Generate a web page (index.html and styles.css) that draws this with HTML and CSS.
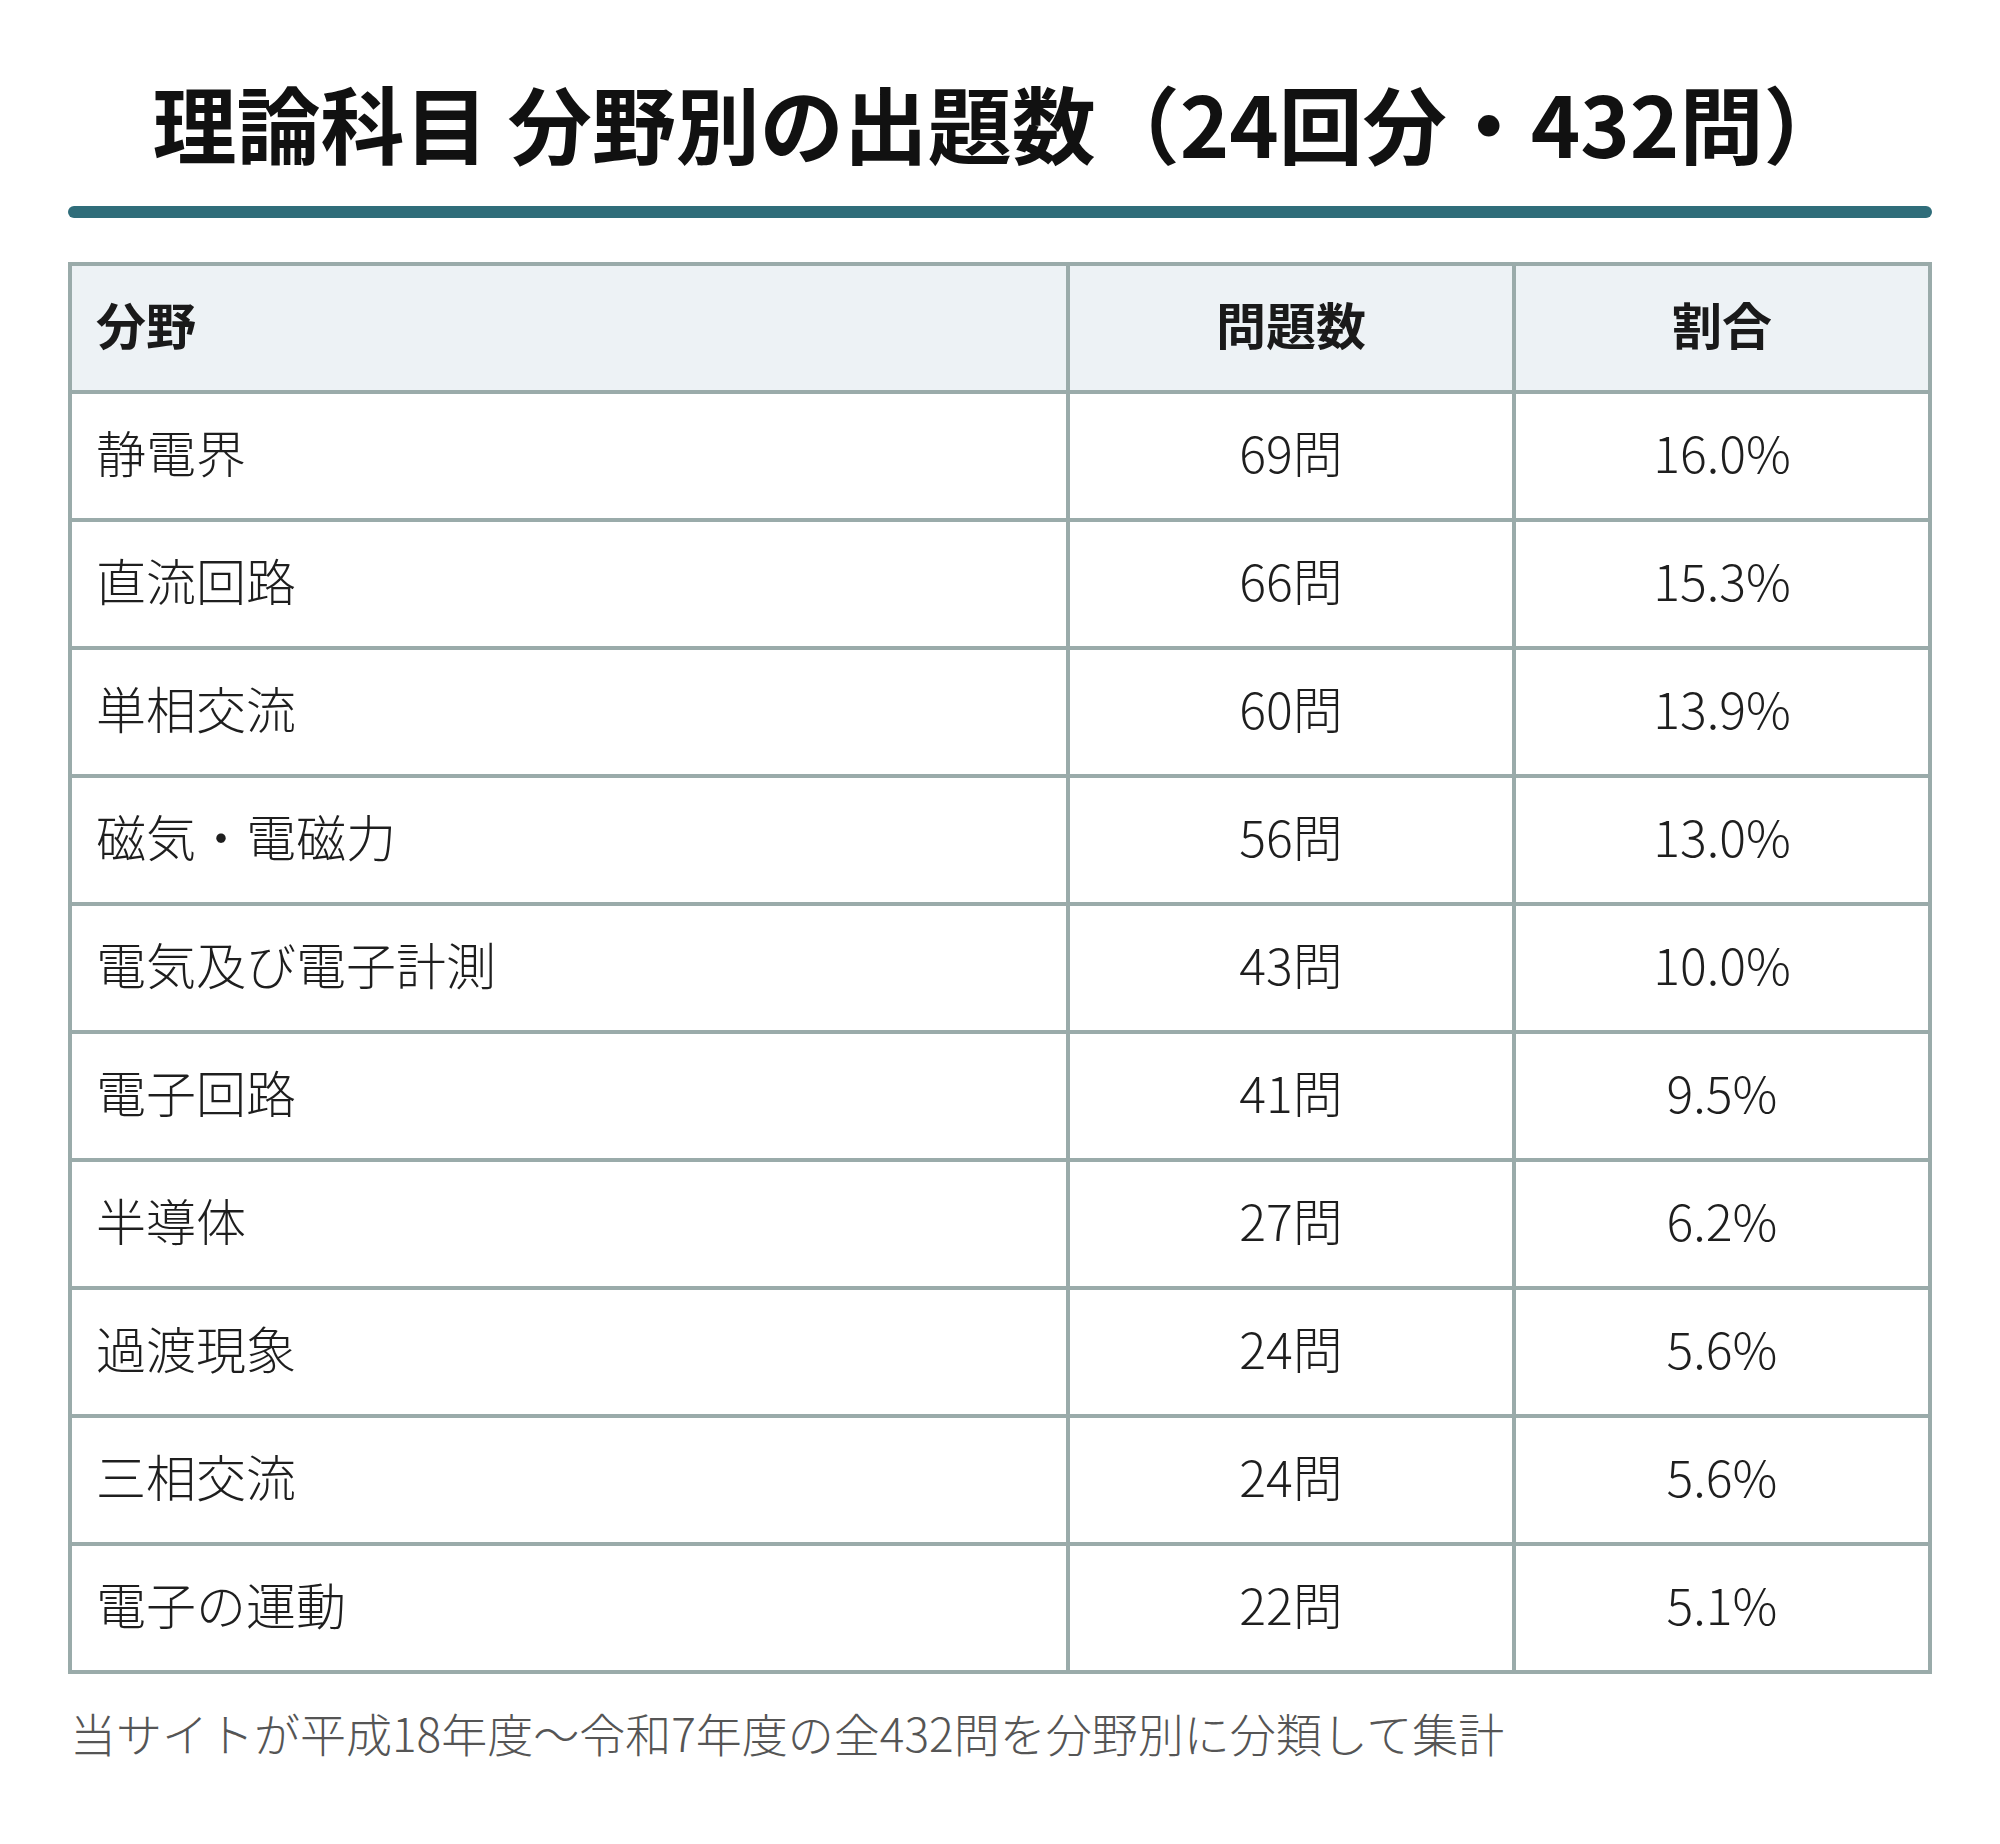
FILE: index.html
```html
<!DOCTYPE html>
<html lang="ja">
<head>
<meta charset="utf-8">
<title>理論科目 分野別の出題数</title>
<link rel="stylesheet" href="styles.css">
</head>
<body>
<main class="page">
  <h1 class="title">理論科目 分野別の出題数（24回分・432問）</h1>
  <div class="rule"></div>
  <table class="stats">
    <colgroup>
      <col class="c-field">
      <col class="c-count">
      <col class="c-ratio">
    </colgroup>
    <thead>
      <tr><th class="left">分野</th><th>問題数</th><th>割合</th></tr>
    </thead>
    <tbody>
      <tr><td class="left">静電界</td><td>69問</td><td>16.0%</td></tr>
      <tr><td class="left">直流回路</td><td>66問</td><td>15.3%</td></tr>
      <tr><td class="left">単相交流</td><td>60問</td><td>13.9%</td></tr>
      <tr><td class="left">磁気・電磁力</td><td>56問</td><td>13.0%</td></tr>
      <tr><td class="left">電気及び電子計測</td><td>43問</td><td>10.0%</td></tr>
      <tr><td class="left">電子回路</td><td>41問</td><td>9.5%</td></tr>
      <tr><td class="left">半導体</td><td>27問</td><td>6.2%</td></tr>
      <tr><td class="left">過渡現象</td><td>24問</td><td>5.6%</td></tr>
      <tr><td class="left">三相交流</td><td>24問</td><td>5.6%</td></tr>
      <tr><td class="left">電子の運動</td><td>22問</td><td>5.1%</td></tr>
    </tbody>
  </table>
  <p class="note">当サイトが平成18年度〜令和7年度の全432問を分野別に分類して集計</p>
</main>
</body>
</html>
```

FILE: styles.css
```css
html, body {
  margin: 0;
  padding: 0;
  background: #ffffff;
}

body {
  font-family: "Noto Sans CJK JP", "Noto Sans", sans-serif;
  color: #222222;
}

.page {
  width: 1864px;
  padding: 72px 68px 0;
}

.title {
  margin: 0;
  font-size: 84px;
  line-height: 100px;
  font-weight: 700;
  color: #111111;
  text-align: center;
}

.rule {
  height: 12px;
  border-radius: 6px;
  background: #2f6d7a;
  margin-top: 34px;
}

.stats {
  margin-top: 44px;
  width: 1864px;
  table-layout: fixed;
  border-collapse: separate;
  border-spacing: 4px;
  background: #9aabaa;
}

.c-field { width: 994px; }
.c-count { width: 442px; }
.c-ratio { width: 412px; }

.stats th,
.stats td {
  height: 124px;
  padding: 0 24px 10px;
  box-sizing: border-box;
  font-size: 50px;
  line-height: 1.5;
  text-align: center;
  vertical-align: middle;
  background: #ffffff;
}

.stats th {
  background: #edf2f5;
  font-weight: 700;
  color: #1a1a1a;
}

.stats td {
  font-weight: 300;
  color: #1e1e1e;
}

.stats .left {
  text-align: left;
}

.note {
  margin: 22px 0 0 2px;
  font-size: 46px;
  line-height: 72px;
  font-weight: 300;
  color: #555555;
}
```
